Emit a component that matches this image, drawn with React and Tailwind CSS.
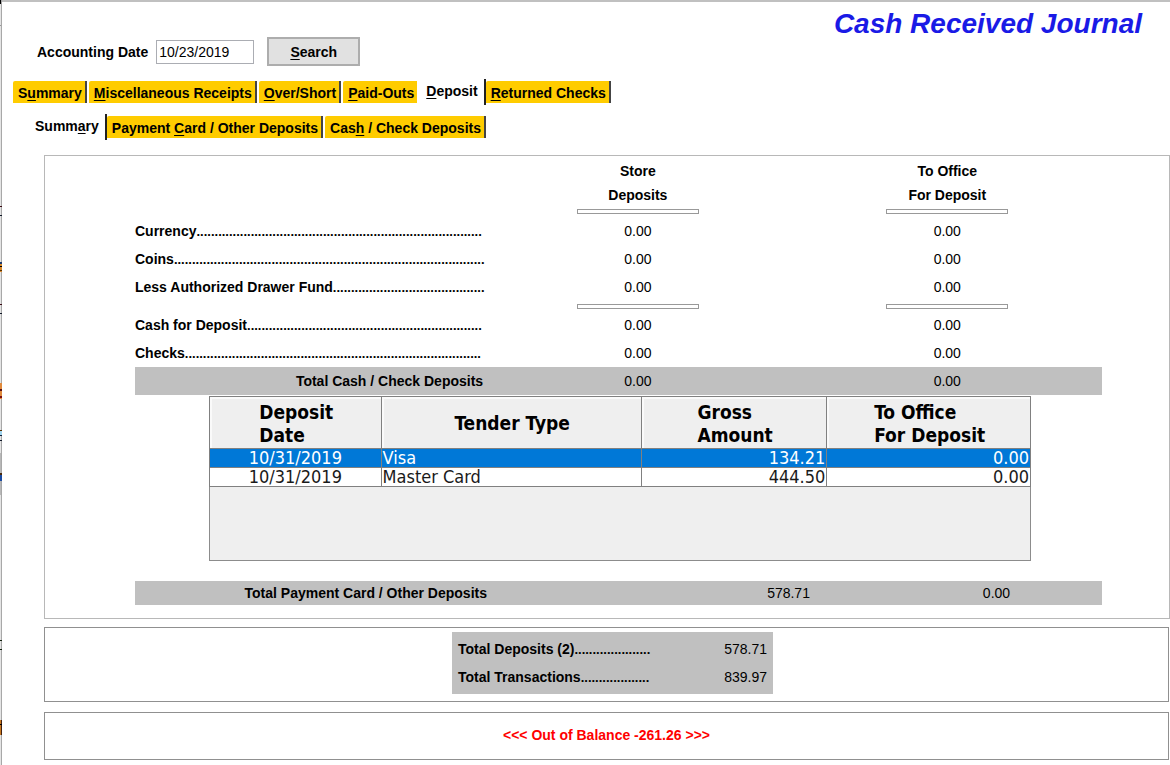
import { useState } from 'react'

const MAIN_TABS = [
  { id: 'summary', label: 'Summary', key: 1 },
  { id: 'misc', label: 'Miscellaneous Receipts', key: 0 },
  { id: 'over', label: 'Over/Short', key: 0 },
  { id: 'paid', label: 'Paid-Outs', key: 0 },
  { id: 'deposit', label: 'Deposit', key: 0 },
  { id: 'returned', label: 'Returned Checks', key: 0 },
]

const SUB_TABS = [
  { id: 'sub-summary', label: 'Summary', key: 4 },
  { id: 'card', label: 'Payment Card / Other Deposits', key: 8 },
  { id: 'cash', label: 'Cash / Check Deposits', key: 3 },
]

const COLLECTED = [
  { label: 'Currency', dots: 79 },
  { label: 'Coins', dots: 86 },
  { label: 'Less Authorized Drawer Fund', dots: 42 },
]

const DEPOSITED = [
  { label: 'Cash for Deposit', dots: 65 },
  { label: 'Checks', dots: 82 },
]

const DEPOSITS = [
  { date: '10/31/2019', tender: 'Visa', gross: '134.21', office: '0.00' },
  { date: '10/31/2019', tender: 'Master Card', gross: '444.50', office: '0.00' },
]

function Mnemonic({ text, at }) {
  return (
    <>
      {text.slice(0, at)}
      <span className="underline decoration-1 underline-offset-2">{text[at]}</span>
      {text.slice(at + 1)}
    </>
  )
}

function TabRow({ tabs, active, onSelect, label }) {
  const activeIndex = tabs.findIndex((t) => t.id === active)
  return (
    <div role="tablist" aria-label={label} className="flex h-[26px] items-center">
      {tabs.map((tab, i) =>
        tab.id === active ? (
          <button
            key={tab.id}
            type="button"
            role="tab"
            aria-selected="true"
            onClick={() => onSelect(tab.id)}
            className="h-[26px] whitespace-nowrap border-r-2 border-[#222222] bg-white pb-[2px] pl-[9px] pr-[6px] font-bold leading-4"
          >
            <Mnemonic text={tab.label} at={tab.key} />
          </button>
        ) : (
          <button
            key={tab.id}
            type="button"
            role="tab"
            aria-selected="false"
            onClick={() => onSelect(tab.id)}
            className={
              'h-[22px] whitespace-nowrap rounded-tl-[2px] bg-[#ffcc00] pl-[5px] pr-[3px] pt-[2px] font-bold leading-4 ' +
              (i === activeIndex - 1 ? '' : 'border-r-2 border-[#444444] ') +
              (i > 0 && i !== activeIndex + 1 ? 'ml-[2px]' : '')
            }
          >
            <Mnemonic text={tab.label} at={tab.key} />
          </button>
        ),
      )}
    </div>
  )
}

function Rule() {
  return <div className="mx-auto h-[5px] w-[122px] border border-[#999999] bg-white" />
}

function Leader({ label, dots }) {
  return (
    <>
      {label}
      <span className="text-[13px]">{'.'.repeat(dots)}</span>
    </>
  )
}

function AmountRow({ label, dots }) {
  return (
    <tr className="h-7">
      <th scope="row" className="whitespace-nowrap p-0 text-left font-bold">
        <Leader label={label} dots={dots} />
      </th>
      <td className="p-0 text-center">0.00</td>
      <td className="p-0 text-center">0.00</td>
    </tr>
  )
}

function HeadCell({ lines }) {
  return (
    <th scope="col" className="border border-[#808080] p-0 font-bold">
      <div className="flex h-[51px] items-center justify-center border-l-2 border-t-2 border-l-[#fafafa] border-t-[#fafafa]">
        <span className="text-left leading-[23px]">
          {lines.map((line) => (
            <span key={line} className="block whitespace-nowrap">
              {line}
            </span>
          ))}
        </span>
      </div>
    </th>
  )
}

function WindowEdge() {
  return (
    <svg className="w-[2px] shrink-0" height="765" viewBox="0 0 2 765" aria-hidden="true" shapeRendering="crispEdges">
      <rect width="1" height="765" fill="#e4e4e4" />
      <rect x="1" width="1" height="765" fill="#a8a8a8" />
      <rect width="1" height="4" fill="#000" />
      <rect y="25" width="1" height="1" fill="#999" />
      <rect y="206" width="2" height="1" fill="#3a0a14" />
      <rect y="215" width="2" height="1" fill="#101828" />
      <rect y="262" width="2" height="2" fill="#1c3c70" />
      <rect y="264" width="2" height="8" fill="#d98a2b" />
      <rect y="266" width="2" height="1" fill="#000" />
      <rect y="270" width="2" height="1" fill="#5a3000" />
      <rect y="304" width="2" height="1" fill="#3a0a14" />
      <rect y="313" width="2" height="1" fill="#101828" />
      <rect y="383" width="2" height="16" fill="#e08a3c" />
      <rect y="389" width="2" height="2" fill="#5a1010" />
      <rect y="396" width="2" height="2" fill="#7a1010" />
      <rect y="430" width="2" height="1" fill="#5a3000" />
      <rect y="431" width="2" height="4" fill="#9fd4ee" />
      <rect y="435" width="2" height="1" fill="#10203c" />
      <rect y="440" width="2" height="1" fill="#101828" />
      <rect y="453" width="1" height="42" fill="#b8b8b8" />
      <rect y="473" width="2" height="2" fill="#4a2808" />
      <rect y="475" width="2" height="6" fill="#1a4aa0" />
      <rect y="640" width="2" height="1" fill="#10200c" />
      <rect y="649" width="2" height="1" fill="#10200c" />
      <rect y="720" width="2" height="15" fill="#c87820" />
      <rect x="1" y="720" width="1" height="15" fill="#402010" />
      <rect y="724" width="2" height="1" fill="#000" />
    </svg>
  )
}

export default function App() {
  const [mainTab, setMainTab] = useState('deposit')
  const [subTab, setSubTab] = useState('sub-summary')
  const [selected, setSelected] = useState(0)

  return (
    <div className="flex min-h-screen bg-white font-['Liberation_Sans',Arial,sans-serif] text-[14px] leading-4 text-black">
      <WindowEdge />
      <main className="min-w-0 flex-1 border-t-2 border-[#c0c0c0]">
        <header className="flex items-start justify-between pl-[35px] pr-7">
          <form className="flex items-center pt-[35px]" onSubmit={(e) => e.preventDefault()}>
            <label htmlFor="accounting-date" className="pr-2 font-bold">
              Accounting Date
            </label>
            <input
              id="accounting-date"
              type="text"
              defaultValue="10/23/2019"
              className="h-6 w-[98px] border border-[#abadb3] bg-white px-[2px] outline-none"
            />
            <button
              type="submit"
              className="ml-[13px] h-[29px] w-[93px] border-2 border-[#adadad] bg-[#e1e1e1] font-bold"
            >
              <Mnemonic text="Search" at={0} />
            </button>
          </form>
          <h1 className="whitespace-nowrap pt-[6px] text-[28px] font-bold italic leading-8 text-[#1a1ae6]">
            Cash Received Journal
          </h1>
        </header>

        <nav className="flex flex-col gap-[9px] pt-[13px]">
          <div className="pl-[11px]">
            <TabRow tabs={MAIN_TABS} active={mainTab} onSelect={setMainTab} label="Journal sections" />
          </div>
          <div className="pl-6">
            <TabRow tabs={SUB_TABS} active={subTab} onSelect={setSubTab} label="Deposit sections" />
          </div>
        </nav>

        <div className="flex flex-col pl-[42px] pt-[15px]">
          <section className="border border-[#b8b8b8] pb-[13px] pl-[90px] pr-[67px] pt-[3px]">
            <table className="w-full table-fixed border-collapse">
              <colgroup>
                <col className="w-[36%]" />
                <col className="w-[32%]" />
                <col className="w-[32%]" />
              </colgroup>
              <thead>
                <tr className="h-[58px] align-top">
                  <td className="p-0" />
                  <th scope="col" className="p-0 text-center font-bold leading-6">
                    Store
                    <br />
                    Deposits
                    <div className="pt-[2px]">
                      <Rule />
                    </div>
                  </th>
                  <th scope="col" className="p-0 text-center font-bold leading-6">
                    To Office
                    <br />
                    For Deposit
                    <div className="pt-[2px]">
                      <Rule />
                    </div>
                  </th>
                </tr>
              </thead>
              <tbody>
                {COLLECTED.map((row) => (
                  <AmountRow key={row.label} {...row} />
                ))}
                <tr className="h-[10px]">
                  <td className="p-0" />
                  <td className="p-0">
                    <Rule />
                  </td>
                  <td className="p-0">
                    <Rule />
                  </td>
                </tr>
                {DEPOSITED.map((row) => (
                  <AmountRow key={row.label} {...row} />
                ))}
                <tr className="h-7 bg-[#c0c0c0]">
                  <th scope="row" className="p-0 text-right font-bold">
                    Total Cash / Check Deposits
                  </th>
                  <td className="p-0 text-center">0.00</td>
                  <td className="p-0 text-center">0.00</td>
                </tr>
              </tbody>
            </table>

            <div className="ml-[74px] mr-[71px] mt-px h-[165px] border border-[#8c8c8c] bg-[#efefef] font-['DejaVu_Sans_Condensed','DejaVu_Sans',sans-serif]">
              <table className="-ml-px -mt-px w-[calc(100%+2px)] table-fixed border-collapse">
                <colgroup>
                  <col className="w-[20.9%]" />
                  <col className="w-[31.7%]" />
                  <col className="w-[22.6%]" />
                  <col className="w-[24.8%]" />
                </colgroup>
                <thead className="text-[19px]">
                  <tr>
                    <HeadCell lines={['Deposit', 'Date']} />
                    <HeadCell lines={['Tender Type']} />
                    <HeadCell lines={['Gross', 'Amount']} />
                    <HeadCell lines={['To Office', 'For Deposit']} />
                  </tr>
                </thead>
                <tbody className="text-[18px] leading-[18px]">
                  {DEPOSITS.map((row, i) => (
                    <tr
                      key={row.tender}
                      onClick={() => setSelected(i)}
                      className={i === selected ? 'bg-[#0078d7] text-white' : 'bg-white text-[#1a1a1a]'}
                    >
                      <td className="border border-[#808080] p-0 text-center">{row.date}</td>
                      <td className="border border-[#808080] py-0 pl-px pr-0">{row.tender}</td>
                      <td className="border border-[#808080] py-0 pl-0 pr-px text-right">{row.gross}</td>
                      <td className="border border-[#808080] py-0 pl-0 pr-px text-right">{row.office}</td>
                    </tr>
                  ))}
                </tbody>
              </table>
            </div>

            <div className="mt-5 flex h-6 items-center bg-[#c0c0c0]">
              <div className="w-[36.4%] whitespace-nowrap text-right font-bold">Total Payment Card / Other Deposits</div>
              <div className="w-[33.4%] text-right">578.71</div>
              <div className="w-[20.7%] text-right">0.00</div>
            </div>
          </section>

          <div className="flex flex-col gap-[10px] pr-px pt-2">
            <section className="flex h-[75px] justify-center border border-[#909090] pt-1">
              <dl className="mr-[-12px] flex h-[62px] w-[321px] flex-col justify-center gap-[11px] bg-[#c0c0c0] px-[6px]">
                <div className="flex justify-between">
                  <dt className="font-bold">
                    <Leader label="Total Deposits (2)" dots={21} />
                  </dt>
                  <dd>578.71</dd>
                </div>
                <div className="flex justify-between">
                  <dt className="font-bold">
                    <Leader label="Total Transactions" dots={19} />
                  </dt>
                  <dd>839.97</dd>
                </div>
              </dl>
            </section>
            <section className="flex h-12 items-center justify-center border border-[#909090] pb-[2px]">
              <p className="font-bold text-[#ff0000]">&lt;&lt;&lt; Out of Balance -261.26 &gt;&gt;&gt;</p>
            </section>
          </div>
        </div>
      </main>
    </div>
  )
}
